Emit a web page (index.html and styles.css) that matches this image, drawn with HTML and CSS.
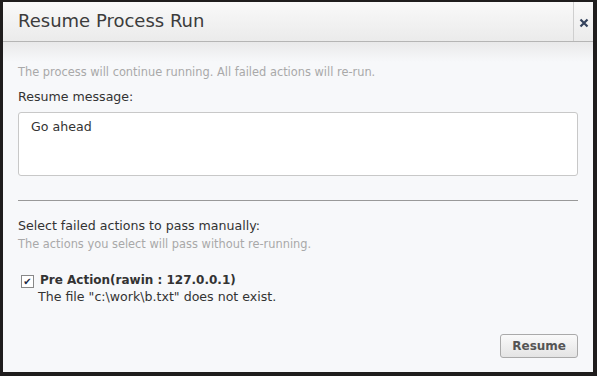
FILE: index.html
```html
<!DOCTYPE html>
<html lang="en">

<head>
    <meta charset="UTF-8">
    <title>Resume Process Run</title>
    <link rel="stylesheet" href="styles.css">
</head>

<body>
    <div class="dialog">
        <div class="dialog-header">
            <div class="dialog-title">Resume Process Run</div>
            <div class="dialog-close">
                <svg width="10" height="10" viewBox="0 0 10 10">
                    <path d="M1.5 1.5 L8.5 8.5 M8.5 1.5 L1.5 8.5" stroke="#34425c" stroke-width="2.2" />
                </svg>
            </div>
        </div>
        <div class="dialog-body">
            <div class="hint">The process will continue running. All failed actions will re-run.</div>
            <div class="label">Resume message:</div>
            <div class="message">Go ahead</div>
            <div class="divider"></div>
            <div class="label">Select failed actions to pass manually:</div>
            <div class="hint">The actions you select will pass without re-running.</div>
            <div class="action">
                <span class="check">&#10004;</span>
                <div class="action-text">
                    <div class="action-name">Pre Action(rawin : 127.0.0.1)</div>
                    <div class="action-error">The file "c:\work\b.txt" does not exist.</div>
                </div>
            </div>
            <div class="footer">
                <div class="btn">Resume</div>
            </div>
        </div>
    </div>
</body>

</html>
```

FILE: styles.css
```css
html,
body {
    margin: 0;
    height: 100%;
}

body {
    background-color: #1f1d1d;
    font-family: "DejaVu Sans", Verdana, sans-serif;
    color: #333;
    padding: 2px 4px 4px 3px;
    box-sizing: border-box;
}

.dialog {
    height: 100%;
    background-color: #f7f8fa;
    display: flex;
    flex-direction: column;
}

.dialog-header {
    display: flex;
    height: 39px;
    background: linear-gradient(#f9f9f9, #ebebeb);
    border-bottom: 1px solid #b5b5b5;
}

.dialog-title {
    flex: 1;
    padding: 8px 0 0 15px;
    font-size: 18px;
    color: #3c3c3c;
}

.dialog-close {
    width: 20px;
    border-left: 1px solid #cfcfcf;
    display: flex;
    justify-content: center;
    padding-top: 16px;
    box-sizing: border-box;
}

.dialog-body {
    flex: 1;
    padding: 23px 15px 0 15px;
    display: flex;
    flex-direction: column;
    background: linear-gradient(#e9e9ea, #f7f8fa 20px);
}

.hint {
    font-size: 11.4px;
    color: #a9a9a9;
}

.label {
    font-size: 12.6px;
    color: #333;
    margin-top: 10px;
    margin-bottom: 8px;
}

.message {
    height: 51px;
    background-color: #fff;
    border: 1px solid #c8c8c8;
    border-radius: 3px;
    padding: 6px 12px 5px 12px;
    font-size: 12.6px;
    color: #333;
}

.divider {
    border-top: 1px solid #999;
    margin-top: 24px;
}

.divider + .label {
    margin-top: 17px;
    margin-bottom: 4px;
}

.action {
    display: flex;
    margin-top: 22px;
    margin-left: 3px;
}

.check {
    width: 11px;
    height: 11px;
    border: 1px solid #888;
    background-color: #fff;
    font-size: 10px;
    line-height: 11px;
    text-align: center;
    color: #1e2a44;
    margin-top: 2px;
    margin-right: 6px;
}

.action-name {
    font-size: 12px;
    font-weight: bold;
}

.action-error {
    font-size: 12.6px;
    margin-top: 2px;
    margin-left: -2px;
}

.footer {
    margin-top: auto;
    padding-bottom: 14px;
    display: flex;
    justify-content: flex-end;
}

.btn {
    padding: 4px 11px;
    border: 1px solid #aaa;
    border-radius: 3px;
    background: linear-gradient(#fafafa, #e4e4e4);
    font-size: 12px;
    font-weight: bold;
    color: #555;
}
```
